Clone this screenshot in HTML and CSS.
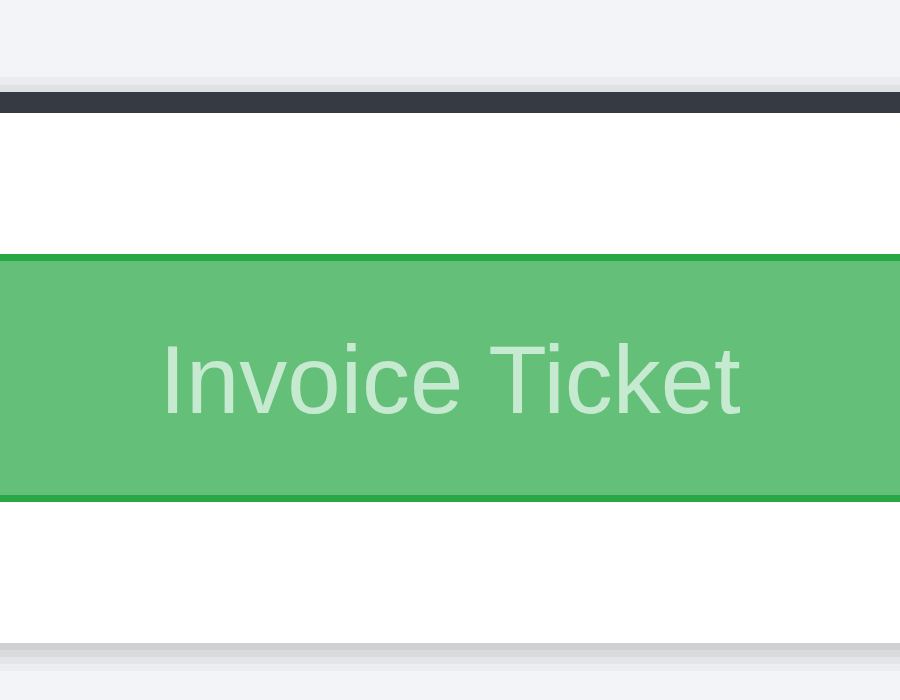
FILE: index.html
```html
<!DOCTYPE html>
<html lang="en">

<head>
    <meta charset="UTF-8">
    <meta name="viewport" content="width=device-width, initial-scale=1.0">
    <title>Invoice</title>
    <link rel="stylesheet" href="styles.css">
</head>

<body>
<div class="page">
    <div class="card">
        <div class="card_body">
            <a href="javascript:;" class="btn_ticket">Invoice Ticket</a>
        </div>
    </div>
</div>
</body>

</html>
```

FILE: styles.css
```css
* {
    margin: 0;
    padding: 0;
    box-sizing: border-box;
}

body {
    background: #f3f4f8;
    font-family: "Liberation Sans", Arial, sans-serif;
}

.page {
    padding-top: 92px;
    overflow: hidden;
    height: 700px;
}

.card {
    margin: 0 -20px;
    background: #fff;
    border-top: 21px solid #353a43;
    box-shadow: 0 -7px 0 0 #e0e1e4,
        0 -15px 0 0 #ebecef,
        0 7px 0 0 #d0d1d3,
        0 14px 0 0 #dadbdd,
        0 21px 0 0 #e4e5e8,
        0 28px 0 0 #ecedf0;
}

.card_body {
    padding: 141px 0;
}

.btn_ticket {
    display: flex;
    align-items: center;
    justify-content: center;
    height: 248px;
    margin: 0 -10px;
    background: #64bf79;
    border: 7px solid #28a745;
    color: #c6ead0;
    font-size: 96px;
    text-decoration: none;
    padding-top: 4px;
}
```
